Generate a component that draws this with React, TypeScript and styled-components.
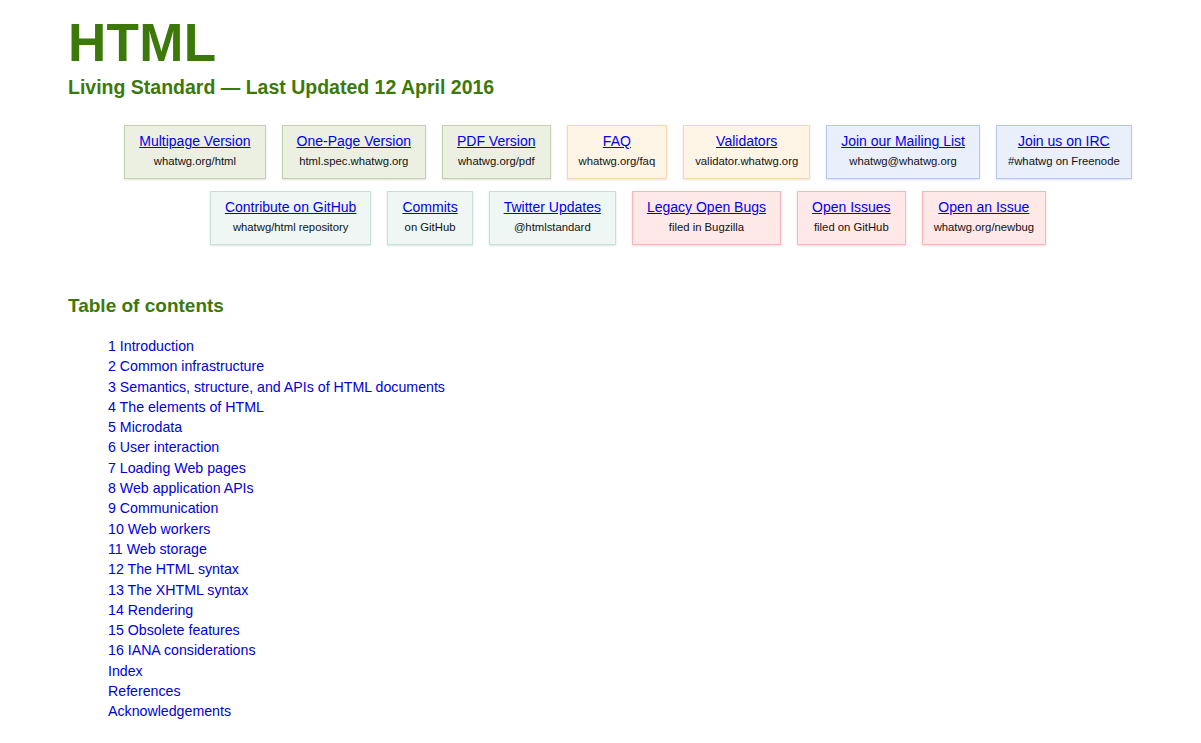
import React from "react";
import styled, { createGlobalStyle } from "styled-components";

const Global = createGlobalStyle`
  html, body { margin: 0; padding: 0; background: #fff; }
  body { font-family: "Liberation Sans", Arial, Helvetica, sans-serif; color: #000; }
`;

const Page = styled.div`
  padding: 13px 53px 0 68px;
`;

const Title = styled.h1`
  margin: 0;
  font-size: 53px;
  line-height: 60px;
  font-weight: bold;
  color: #3c790a;
  letter-spacing: 0.3px;
`;

const Subtitle = styled.h2`
  margin: 2px 0 0 0;
  font-size: 19.5px;
  line-height: 24px;
  font-weight: bold;
  color: #3c790a;
`;

const Links = styled.ul`
  list-style: none;
  margin: 26px 0 0 0;
  padding: 0 0 0 40px;
  display: flex;
  flex-wrap: wrap;
  justify-content: center;
  column-gap: 16px;
  row-gap: 12px;
`;

type Tone = "green" | "orange" | "blue" | "teal" | "red";

const tones: Record<Tone, { bg: string; border: string }> = {
  green: { bg: "#ebf0e3", border: "#c3d2ad" },
  orange: { bg: "#fff5e7", border: "#fbd7b0" },
  blue: { bg: "#e9effb", border: "#b5c8f0" },
  teal: { bg: "#eef7f4", border: "#c2e3d7" },
  red: { bg: "#ffe8e8", border: "#fcb4b4" },
};

const LinkBox = styled.li<{ $tone: Tone }>`
  box-sizing: border-box;
  height: 54px;
  padding: 6px 11px 0 11px;
  text-align: center;
  background: ${(p) => tones[p.$tone].bg};
  border: 1px solid ${(p) => tones[p.$tone].border};
  box-shadow: 0 1px 2px rgba(0, 0, 0, 0.12);
  display: flex;
  flex-direction: column;
  align-items: center;
`;

const BoxLink = styled.a`
  padding: 0 3px;
  font-size: 14px;
  line-height: 18px;
  color: #0000ee;
  text-decoration: underline;
  white-space: nowrap;
`;

const BoxNote = styled.span`
  margin-top: 3px;
  font-size: 11.3px;
  line-height: 16px;
  color: #111;
  white-space: nowrap;
`;

const TocHeading = styled.h2`
  margin: 49px 0 0 0;
  font-size: 19px;
  line-height: 24px;
  font-weight: bold;
  color: #3c790a;
`;

const Toc = styled.ol`
  list-style: none;
  margin: 18px 0 0 0;
  padding: 0 0 0 40px;
`;

const TocItem = styled.li`
  font-size: 14.2px;
  line-height: 20.3px;
`;

const TocLink = styled.a`
  color: #0000dd;
  text-decoration: none;
`;

const links: { t: string; n: string; tone: Tone }[] = [
  { t: "Multipage Version", n: "whatwg.org/html", tone: "green" },
  { t: "One-Page Version", n: "html.spec.whatwg.org", tone: "green" },
  { t: "PDF Version", n: "whatwg.org/pdf", tone: "green" },
  { t: "FAQ", n: "whatwg.org/faq", tone: "orange" },
  { t: "Validators", n: "validator.whatwg.org", tone: "orange" },
  { t: "Join our Mailing List", n: "whatwg@whatwg.org", tone: "blue" },
  { t: "Join us on IRC", n: "#whatwg on Freenode", tone: "blue" },
  { t: "Contribute on GitHub", n: "whatwg/html repository", tone: "teal" },
  { t: "Commits", n: "on GitHub", tone: "teal" },
  { t: "Twitter Updates", n: "@htmlstandard", tone: "teal" },
  { t: "Legacy Open Bugs", n: "filed in Bugzilla", tone: "red" },
  { t: "Open Issues", n: "filed on GitHub", tone: "red" },
  { t: "Open an Issue", n: "whatwg.org/newbug", tone: "red" },
];

const toc = [
  "1 Introduction",
  "2 Common infrastructure",
  "3 Semantics, structure, and APIs of HTML documents",
  "4 The elements of HTML",
  "5 Microdata",
  "6 User interaction",
  "7 Loading Web pages",
  "8 Web application APIs",
  "9 Communication",
  "10 Web workers",
  "11 Web storage",
  "12 The HTML syntax",
  "13 The XHTML syntax",
  "14 Rendering",
  "15 Obsolete features",
  "16 IANA considerations",
  "Index",
  "References",
  "Acknowledgements",
];

export default function App() {
  return (
    <>
      <Global />
      <Page>
        <Title>HTML</Title>
        <Subtitle>Living Standard — Last Updated 12 April 2016</Subtitle>
        <Links>
          {links.map((l) => (
            <LinkBox key={l.t} $tone={l.tone}>
              <BoxLink href="#">{l.t}</BoxLink>
              <BoxNote>{l.n}</BoxNote>
            </LinkBox>
          ))}
        </Links>
        <TocHeading>Table of contents</TocHeading>
        <Toc>
          {toc.map((t) => (
            <TocItem key={t}>
              <TocLink href="#">{t}</TocLink>
            </TocItem>
          ))}
        </Toc>
      </Page>
    </>
  );
}
